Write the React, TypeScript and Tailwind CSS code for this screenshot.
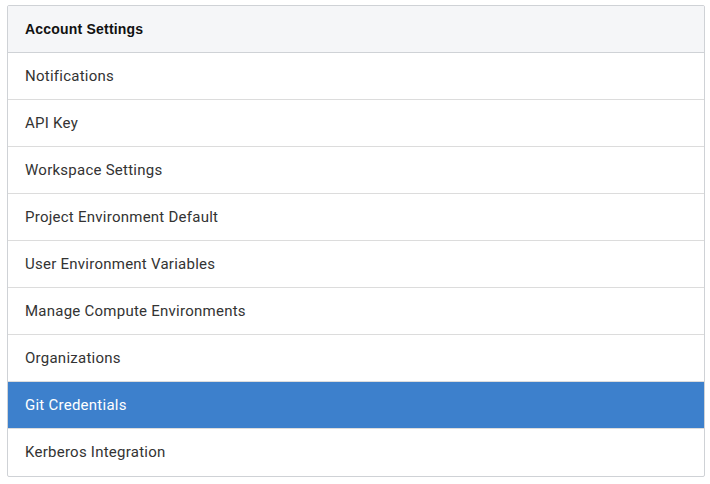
import React from "react";

const items = [
  "Notifications",
  "API Key",
  "Workspace Settings",
  "Project Environment Default",
  "User Environment Variables",
  "Manage Compute Environments",
  "Organizations",
  "Git Credentials",
  "Kerberos Integration",
];

export default function App() {
  return (
    <div className="min-h-[484px] bg-white pt-[5px] pl-[7px]">
      <div className="w-[698px] border border-[#cfd2d6] rounded-[2px] overflow-hidden">
        <div className="h-[47px] flex items-center pl-[17px] bg-[#f5f6f8] border-b border-[#cfd2d6] text-[14px] font-bold text-[#111] tracking-[0.2px] [font-family:'Liberation_Sans',Arial,sans-serif]">
          Account Settings
        </div>
        {items.map((it, i) => {
          const active = it === "Git Credentials";
          return (
            <div
              key={it}
              className={
                "h-[47px] flex items-center pl-[17px] text-[15px] tracking-[0.25px] [font-family:Roboto,sans-serif] " +
                (i < items.length - 1 ? "border-b border-[#dcdcdc] " : "") +
                (active ? "bg-[#3d80cc] text-white" : "text-[#333]")
              }
            >
              {it}
            </div>
          );
        })}
      </div>
    </div>
  );
}
